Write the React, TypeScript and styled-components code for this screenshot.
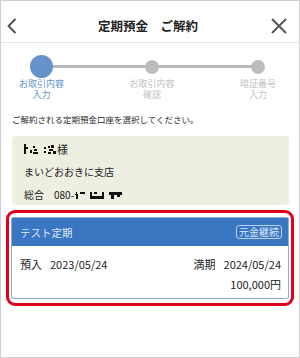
import styled, { createGlobalStyle } from 'styled-components';

const GlobalStyle = createGlobalStyle`
  html, body {
    margin: 0;
    padding: 0;
    background: #fff;
  }
  body {
    font-family: 'Noto Sans CJK JP', 'Noto Sans', sans-serif;
    color: #333;
  }
`;

const Screen = styled.div`
  width: 300px;
  height: 358px;
  box-sizing: border-box;
  border: 1px solid #cfcfcf;
  background: #fff;
  display: flex;
  flex-direction: column;
  overflow: hidden;
`;

const Header = styled.header`
  height: 42px;
  box-sizing: border-box;
  padding: 8px 10px 0 6px;
  border-bottom: 1px solid #e8e8e8;
  display: grid;
  grid-template-columns: 40px 1fr 40px;
  align-items: center;

  & > .title {
    margin: 0;
    text-align: center;
    font-size: 12.5px;
    font-weight: 700;
    color: #222;
  }
  & > .close {
    justify-self: end;
  }
`;

const IconButton = styled.button`
  display: flex;
  align-items: center;
  border: 0;
  padding: 0;
  background: none;
  width: 18px;
  height: 18px;
`;

const Stepper = styled.ol`
  position: relative;
  display: flex;
  justify-content: space-between;
  margin: 0;
  padding: 12px 23px 0 18px;
  list-style: none;

  &::before {
    content: '';
    position: absolute;
    top: 22px;
    left: 42px;
    right: 41px;
    height: 3px;
    background: #b9b9b9;
  }
`;

const Step = styled.li<{ $active?: boolean }>`
  position: relative;
  display: flex;
  flex-direction: column;
  align-items: center;

  & > .dot {
    height: 23px;
    display: flex;
    align-items: center;
  }
  & > .dot > span {
    display: block;
    width: ${(p) => (p.$active ? '23px' : '14px')};
    height: ${(p) => (p.$active ? '23px' : '14px')};
    border-radius: 50%;
    background: ${(p) => (p.$active ? '#6592cb' : '#bcbcbc')};
  }
  & > .label {
    margin-top: 1px;
    font-size: 9px;
    line-height: 10.5px;
    text-align: center;
    color: ${(p) => (p.$active ? '#6592cb' : '#c2c2c2')};
  }
`;

const Lead = styled.p`
  margin: 13px 0 0 11px;
  font-size: 8.5px;
  line-height: 12px;
  color: #2a2a2a;
`;

const AccountCard = styled.section`
  margin: 11px 10px 0 11px;
  padding: 2px 12px 0;
  height: 69px;
  box-sizing: border-box;
  border-radius: 4px;
  background: #edefe1;
`;

const AccountRow = styled.div<{ $large?: boolean }>`
  display: flex;
  align-items: center;
  height: 22.5px;
  font-size: ${(p) => (p.$large ? '11px' : '10px')};
  color: #222;

  & > .key {
    margin-right: 10px;
  }
`;

const Selected = styled.div`
  margin: 5px 5px 0;
  padding: 4px 2px;
  border: 3px solid #e3001b;
  border-radius: 9px;
`;

const DepositCard = styled.div`
  border: 1px solid #8fa9cb;
  border-radius: 2px;
  overflow: hidden;
  background: #fff;
`;

const DepositHead = styled.div`
  height: 28px;
  display: flex;
  align-items: center;
  justify-content: space-between;
  padding: 0 6px 0 8px;
  background: #3a77c3;
  color: #dfe9f6;
  font-size: 10.5px;
`;

const Badge = styled.span`
  border: 1px solid #b9cfec;
  border-radius: 3px;
  padding: 0 2px;
  font-size: 10px;
  line-height: 12px;
  color: #d8e5f6;
`;

const DepositBody = styled.div`
  padding: 8px 7px 4px 8px;
`;

const DepositRow = styled.div`
  display: flex;
  justify-content: space-between;
  align-items: center;
  height: 20px;
  font-size: 11px;
  color: #222;

  &.end {
    justify-content: flex-end;
  }
  & .key {
    margin-right: 8px;
  }
`;

function Mask({ w, h, rects }: { w: number; h: number; rects: number[][] }) {
  return (
    <svg width={w} height={h} viewBox={`0 0 ${w} ${h}`} style={{ display: 'block' }}>
      {rects.map(([x, y, rw, rh], i) => (
        <rect key={i} x={x} y={y} width={rw} height={rh} fill="#111" />
      ))}
    </svg>
  );
}

const nameMask = [
  [0, 1, 2, 10],
  [2, 4, 2, 2],
  [6, 7, 2, 3],
  [9, 3, 2, 2],
  [10, 6, 3, 2],
  [9, 9, 5, 2],
  [20, 4, 2, 2],
  [20, 8, 2, 2],
  [24, 3, 2, 2],
  [27, 2, 3, 3],
  [25, 6, 4, 2],
  [24, 9, 3, 2],
  [29, 8, 3, 3],
];

const phoneMask = [
  [2, 3, 1, 2],
  [1, 5, 3, 1],
  [2, 6, 2, 4],
  [6, 3, 5, 2],
  [16, 3, 2, 6],
  [16, 7, 14, 3],
  [20, 3, 3, 2],
  [28, 3, 2, 6],
  [35, 3, 13, 3],
  [37, 6, 3, 4],
  [43, 6, 3, 2],
];

function Chevron() {
  return (
    <svg width="10" height="16" viewBox="0 0 10 16">
      <polyline points="8.5,1 1.5,8 8.5,15" fill="none" stroke="#4a4a4a" strokeWidth="1.8" />
    </svg>
  );
}

function Cross() {
  return (
    <svg width="16" height="16" viewBox="0 0 16 16">
      <path d="M1 1 L15 15 M15 1 L1 15" fill="none" stroke="#555" strokeWidth="1.9" />
    </svg>
  );
}

export default function App() {
  return (
    <>
      <GlobalStyle />
      <Screen>
        <Header>
          <IconButton aria-label="戻る">
            <Chevron />
          </IconButton>
          <h1 className="title">定期預金　ご解約</h1>
          <IconButton className="close" aria-label="閉じる">
            <Cross />
          </IconButton>
        </Header>

        <Stepper>
          <Step $active>
            <div className="dot">
              <span />
            </div>
            <div className="label">
              お取引内容
              <br />
              入力
            </div>
          </Step>
          <Step>
            <div className="dot">
              <span />
            </div>
            <div className="label">
              お取引内容
              <br />
              確認
            </div>
          </Step>
          <Step>
            <div className="dot">
              <span />
            </div>
            <div className="label">
              暗証番号
              <br />
              入力
            </div>
          </Step>
        </Stepper>

        <Lead>ご解約される定期預金口座を選択してください。</Lead>

        <AccountCard>
          <AccountRow $large>
            <Mask w={33} h={12} rects={nameMask} />
            様
          </AccountRow>
          <AccountRow>まいどおおきに支店</AccountRow>
          <AccountRow>
            <span className="key">総合</span>
            080-
            <Mask w={48} h={11} rects={phoneMask} />
          </AccountRow>
        </AccountCard>

        <Selected>
          <DepositCard>
            <DepositHead>
              テスト定期
              <Badge>元金継続</Badge>
            </DepositHead>
            <DepositBody>
              <DepositRow>
                <span>
                  <span className="key">預入</span>2023/05/24
                </span>
                <span>
                  <span className="key">満期</span>2024/05/24
                </span>
              </DepositRow>
              <DepositRow className="end">100,000円</DepositRow>
            </DepositBody>
          </DepositCard>
        </Selected>
      </Screen>
    </>
  );
}
